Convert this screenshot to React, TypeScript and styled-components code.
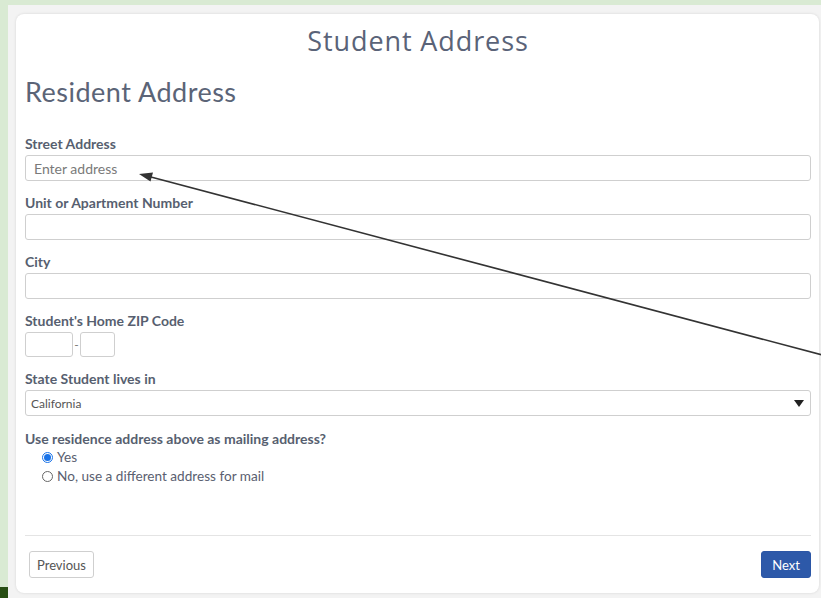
import React from "react";
import styled, { createGlobalStyle } from "styled-components";

const GlobalStyle = createGlobalStyle`
  html, body {
    margin: 0;
    padding: 0;
    background: #d9ead3;
  }
  body {
    font-family: Lato, "Open Sans", sans-serif;
    color: #555d6e;
  }
  * { box-sizing: border-box; }
`;

const Page = styled.div`
  position: relative;
  width: 821px;
  height: 598px;
  display: grid;
  grid-template-columns: 8px 1fr;
  grid-template-rows: 5px 1fr;
  overflow: hidden;
`;

const LeftStrip = styled.div`
  grid-column: 1;
  grid-row: 2;
  display: flex;
  flex-direction: column;
  justify-content: flex-end;
`;

const DarkBlock = styled.div`
  height: 11px;
  background: #274e13;
`;

const Frame = styled.div`
  grid-column: 2;
  grid-row: 2;
  background: #f3f3f3;
  padding: 9px 2px 5px 8px;
  display: flex;
`;

const Card = styled.div`
  flex: 1;
  background: #fff;
  border-radius: 8px;
  box-shadow: 0 0 3px rgba(0, 0, 0, 0.12);
  padding: 10px 8px 15px 9px;
  display: flex;
  flex-direction: column;
`;

const Title = styled.h1`
  margin: 0;
  text-align: center;
  font-family: "Open Sans", Lato, sans-serif;
  font-weight: 400;
  font-size: 27px;
  line-height: 34px;
  color: #5a6378;
  letter-spacing: 0.9px;
`;

const Section = styled.h2`
  margin: 17px 0 0;
  font-family: Lato, sans-serif;
  font-weight: 400;
  font-size: 27px;
  line-height: 34px;
  letter-spacing: 0.5px;
  color: #5b6477;
`;

const Form = styled.div`
  margin-top: 27px;
  display: flex;
  flex-direction: column;
`;

const Field = styled.div`
  display: flex;
  flex-direction: column;
  margin-bottom: 14px;
`;

const Label = styled.label`
  font-weight: 700;
  font-size: 14px;
  line-height: 16px;
  color: #575f70;
  margin-bottom: 3px;
`;

const TextInput = styled.input`
  height: 26px;
  width: 100%;
  border: 1px solid #cfcfcf;
  border-radius: 3px;
  padding: 0 8px;
  font-family: Lato, sans-serif;
  font-size: 14px;
  color: #555;
  outline: none;
  &::placeholder { color: #7a7a7a; }
`;

const ZipRow = styled.div`
  display: flex;
  align-items: center;
`;

const ZipBox = styled.input<{ $w: number }>`
  width: ${(p) => p.$w}px;
  height: 25px;
  border: 1px solid #cfcfcf;
  border-radius: 3px;
  outline: none;
`;

const Dash = styled.span`
  font-size: 12px;
  color: #777;
  width: 7px;
  text-align: center;
`;

const SelectBox = styled.div`
  height: 26px;
  border: 1px solid #cfcfcf;
  border-radius: 3px;
  display: flex;
  align-items: center;
  justify-content: space-between;
  padding: 0 5px;
  font-size: 12px;
  color: #555;
`;

const Caret = styled.span`
  width: 0;
  height: 0;
  border-left: 5px solid transparent;
  border-right: 5px solid transparent;
  border-top: 7px solid #222;
  margin-right: 1px;
`;

const Question = styled.div`
  font-weight: 700;
  font-size: 14px;
  line-height: 16px;
  color: #575f70;
  margin-top: 1px;
`;

const Options = styled.div`
  display: flex;
  flex-direction: column;
  padding-left: 17px;
  margin-top: 1px;
`;

const Option = styled.label`
  display: flex;
  align-items: center;
  font-size: 13.6px;
  line-height: 19px;
  color: #5a6070;
`;

const Radio = styled.span<{ $on?: boolean }>`
  width: 11px;
  height: 11px;
  border-radius: 50%;
  border: 1px solid ${(p) => (p.$on ? "#1a73e8" : "#666")};
  margin-right: 4px;
  display: flex;
  align-items: center;
  justify-content: center;
  &::after {
    content: "";
    display: ${(p) => (p.$on ? "block" : "none")};
    width: 7px;
    height: 7px;
    border-radius: 50%;
    background: #1a73e8;
  }
`;

const Spacer = styled.div`
  flex: 1;
`;

const Divider = styled.hr`
  margin: 0;
  border: 0;
  border-top: 1px solid #e4e4e4;
`;

const Footer = styled.div`
  display: flex;
  justify-content: space-between;
  padding: 15px 0 0 4px;
`;

const Button = styled.button<{ $primary?: boolean }>`
  height: 27px;
  border-radius: 3px;
  font-family: Lato, sans-serif;
  font-size: 13px;
  border: 1px solid ${(p) => (p.$primary ? "#2b56a6" : "#cfcfcf")};
  background: ${(p) => (p.$primary ? "#2d59a9" : "#fff")};
  color: ${(p) => (p.$primary ? "#fff" : "#555")};
  padding: ${(p) => (p.$primary ? "0 10px" : "0 7px")};
`;

const Pointer = styled.svg`
  position: absolute;
  left: 0;
  top: 0;
  pointer-events: none;
`;

export default function App() {
  return (
    <>
      <GlobalStyle />
      <Page>
        <LeftStrip>
          <DarkBlock />
        </LeftStrip>
        <Frame>
          <Card>
            <Title>Student Address</Title>
            <Section>Resident Address</Section>
            <Form>
              <Field>
                <Label>Street Address</Label>
                <TextInput placeholder="Enter address" />
              </Field>
              <Field>
                <Label>Unit or Apartment Number</Label>
                <TextInput />
              </Field>
              <Field>
                <Label>City</Label>
                <TextInput />
              </Field>
              <Field>
                <Label>Student's Home ZIP Code</Label>
                <ZipRow>
                  <ZipBox $w={48} />
                  <Dash>-</Dash>
                  <ZipBox $w={35} />
                </ZipRow>
              </Field>
              <Field>
                <Label>State Student lives in</Label>
                <SelectBox>
                  <span>California</span>
                  <Caret />
                </SelectBox>
              </Field>
              <Question>Use residence address above as mailing address?</Question>
              <Options>
                <Option>
                  <Radio $on />
                  Yes
                </Option>
                <Option>
                  <Radio />
                  No, use a different address for mail
                </Option>
              </Options>
            </Form>
            <Spacer />
            <Divider />
            <Footer>
              <Button>Previous</Button>
              <Button $primary>Next</Button>
            </Footer>
          </Card>
        </Frame>
        <Pointer width="821" height="598" viewBox="0 0 821 598">
          <line x1="150" y1="176.7" x2="826" y2="356" stroke="#333" strokeWidth="1.6" />
          <polygon points="139,174 153,172.5 150.5,181.5" fill="#333" />
        </Pointer>
      </Page>
    </>
  );
}
